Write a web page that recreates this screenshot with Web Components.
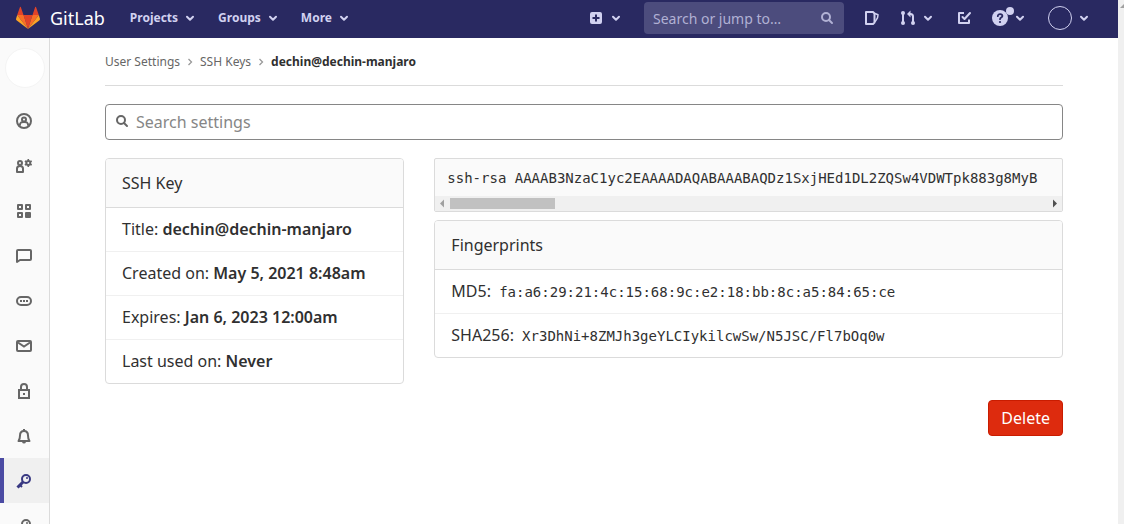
<!DOCTYPE html>
<html lang="en">
<head>
<meta charset="utf-8">
<title>dechin@dechin-manjaro · SSH Keys · User Settings · GitLab</title>
<style>
  body { margin: 0; background: #fff; color: #303030; font: 16px/24px "Noto Sans", sans-serif; }
</style>
</head>
<body>
<settings-app>
  <top-nav slot="header"></top-nav>
  <side-nav slot="sidebar"></side-nav>
  <bread-crumbs current="dechin@dechin-manjaro">
    <a href="#settings">User Settings</a>
    <a href="#keys">SSH Keys</a>
  </bread-crumbs>
  <settings-search></settings-search>
  <key-columns>
    <info-card slot="left" heading="SSH Key">
      <detail-row label="Title:"><strong>dechin@dechin-manjaro</strong></detail-row>
      <detail-row label="Created on:"><strong>May 5, 2021 8:48am</strong></detail-row>
      <detail-row label="Expires:"><strong>Jan 6, 2023 12:00am</strong></detail-row>
      <detail-row label="Last used on:"><strong>Never</strong></detail-row>
    </info-card>
    <key-text slot="right">ssh-rsa AAAAB3NzaC1yc2EAAAADAQABAAABAQDz1SxjHEd1DL2ZQSw4VDWTpk883g8MyB</key-text>
    <info-card slot="right" heading="Fingerprints">
      <detail-row label="MD5:"><code>fa:a6:29:21:4c:15:68:9c:e2:18:bb:8c:a5:84:65:ce</code></detail-row>
      <detail-row label="SHA256:"><code>Xr3DhNi+8ZMJh3geYLCIykilcwSw/N5JSC/Fl7bOq0w</code></detail-row>
    </info-card>
  </key-columns>
  <danger-button>Delete</danger-button>
</settings-app>

<script>
const define = (name, html, setup) => {
  const template = document.createElement('template');
  template.innerHTML = html;
  customElements.define(name, class extends HTMLElement {
    constructor() {
      super();
      this.attachShadow({ mode: 'open' }).append(template.content.cloneNode(true));
    }
    connectedCallback() { if (setup) setup(this, this.shadowRoot); }
  });
};

const line = 'fill="none" stroke="currentColor" stroke-width="2"';
const icons = {
  chevron: `<path ${line} stroke-linecap="round" stroke-linejoin="round" d="M5 6.8 8 9.8 11 6.8"/>`,
  plus: `<path fill="currentColor" fill-rule="evenodd" d="M4 2h8a2 2 0 0 1 2 2v8a2 2 0 0 1-2 2H4a2 2 0 0 1-2-2V4a2 2 0 0 1 2-2zm3 2.500v2.500H4.500v2H7v2.500h2V9h2.500V7H9V4.500z"/>`,
  search: `<circle cx="7" cy="7" r="4" ${line}/><path ${line} stroke-linecap="round" d="m10 10 3 3"/>`,
  issues: `<path ${line} stroke-linejoin="round" d="M2 2h7l1.500 1.500v9L9 14H2z"/><path fill="none" stroke="currentColor" stroke-width="1.500" stroke-linejoin="round" d="m11 3.500 3 1.300-.500 3-2.500 4"/>`,
  merge: `<path ${line} d="M3 3v10M13 13V6.500Q13 4 10.500 4H9"/><circle cx="3" cy="3" r="2" fill="currentColor"/><circle cx="3" cy="13" r="2" fill="currentColor"/><circle cx="13" cy="13" r="2" fill="currentColor"/><path fill="currentColor" d="m7 4 3.500-3.500v7z"/>`,
  todo: `<path ${line} stroke-linejoin="round" d="M8 3H3v10h10V9.500"/><path ${line} stroke-linecap="round" stroke-linejoin="round" d="m6.500 7 2 2L14 3"/>`,
  help: `<circle cx="8" cy="8" r="8" fill="currentColor"/><path fill="none" stroke="#292961" stroke-width="1.800" stroke-linecap="round" d="M5.800 6.200C5.800 3.300 10.400 3.600 10.400 6.100 10.400 7.700 8 7.500 8 9.200"/><circle cx="8" cy="12" r="1.100" fill="#292961"/>`,
  profile: `<circle cx="8" cy="8" r="7" ${line}/><circle cx="8" cy="6.500" r="2" ${line}/><path ${line} d="M3.800 12.800C4 9 5.500 9 8 9s4 0 4.200 3.800"/>`,
  account: `<circle cx="4" cy="5" r="2" ${line}/><path ${line} stroke-linejoin="round" d="M1 14V10.500Q1 8 4 8T7 10.500V14z"/><circle cx="12.300" cy="5" r="2" ${line}/><path fill="none" stroke="currentColor" stroke-width="1.600" d="M12.300 1v2m0 4v2M8.900 3l1.700 1m3.400 2 1.700 1m0-4-1.700 1m-3.400 2-1.700 1"/>`,
  apps: `<path ${line} stroke-linejoin="round" d="M2 2h4v4H2zm8 0h4v4h-4zM2 10h4v4H2z"/><rect x="9" y="9" width="6" height="6" rx="1" fill="currentColor"/>`,
  comment: `<path ${line} stroke-linejoin="round" d="M1 14V3Q1 2 2 2H14Q15 2 15 3V11Q15 12 14 12H4z"/>`,
  token: `<rect x="1" y="4" width="14" height="8" rx="4" ${line}/><path fill="currentColor" d="M4 7h2v2H4zm3 0h2v2H7zm3 0h2v2h-2z"/>`,
  mail: `<rect x="1" y="3" width="14" height="10" rx="1" ${line}/><path ${line} d="m2 4.500 6 4 6-4"/>`,
  lock: `<path ${line} d="M3 7h10v8H3zM5 7V4a3 3 0 0 1 6 0v3"/><path fill="currentColor" d="M7 10h2v2H7z"/>`,
  bell: `<path ${line} stroke-linejoin="round" d="M2.500 13h11Q12 11 12 7.500C12 4.500 10.500 3 8 3S4 4.500 4 7.500Q4 11 2.500 13z"/><path fill="currentColor" d="M7 1h2v2H7zM6 14h4q-.500 1.500-2 1.500T6 14z"/>`,
  key: `<circle cx="10" cy="6" r="4" ${line}/><circle cx="11" cy="5" r="1" fill="currentColor"/><path fill="none" stroke="currentColor" stroke-width="3" d="m7 9-5.500 5.500"/><path ${line} d="m3.500 11.500 2.500 2.500"/>`,
};

define('ui-icon', `
  <style>
    :host { display: block; flex: none; width: 16px; height: 16px; }
    svg { display: block; width: 100%; height: 100%; }
  </style>
  <svg viewBox="0 0 16 16" aria-hidden="true"></svg>`,
  (el, root) => { root.querySelector('svg').innerHTML = icons[el.getAttribute('name')]; });

define('nav-menu', `
  <style>
    :host { display: block; }
    button { display: flex; align-items: center; gap: 4px; height: 32px; margin: 0; padding: 0; border: 0; background: none; color: inherit; font: inherit; cursor: pointer; }
  </style>
  <button type="button"><slot></slot><ui-icon name="chevron"></ui-icon></button>`,
  (el, root) => root.querySelector('button').setAttribute('aria-label', el.getAttribute('label')));

define('top-nav', `
  <style>
    :host { display: block; background: #292961; color: #d1d1f0; }
    header { display: flex; align-items: center; justify-content: space-between; height: 38px; padding: 0 26px 2px 16px; box-sizing: border-box; }
    nav, .tools { display: flex; align-items: center; gap: 20px; }
    .menus { font-size: 12px; font-weight: 700; }
    a { color: inherit; text-decoration: none; }
    .brand { display: flex; align-items: center; gap: 10px; margin-right: 5px; color: #fff; font-size: 18px; font-weight: 400; }
    .brand svg { display: block; width: 24px; height: 24px; }
    form { position: relative; margin: 0; }
    input { display: block; width: 200px; height: 32px; box-sizing: border-box; margin: 0; padding: 0 32px 0 9px; border: 0; border-radius: 4px; background: #4c4c7d; color: #d1d1f0; font: 14px/20px "Noto Sans", sans-serif; }
    input::placeholder { color: #b1b1d4; opacity: 1; }
    form ui-icon { position: absolute; right: 9px; top: 8px; color: #b1b1d4; }
    .help { position: relative; }
    .dot { position: absolute; left: 14px; top: -3px; width: 8px; height: 8px; border-radius: 50%; background: #d1d1f0; }
    .avatar { width: 22px; height: 22px; border: 1px solid #d1d1f0; border-radius: 50%; }
  </style>
  <header>
    <nav class="menus" aria-label="Main">
      <a class="brand" href="#home">
        <svg viewBox="0 0 24 24" aria-hidden="true">
          <path fill="#e24329" d="m12 23 4.500-14h-9z"/>
          <path fill="#fc6d26" d="M12 23 7.500 9H1.200zM12 23l4.500-14h6.300z"/>
          <path fill="#fca326" d="M1.200 9 0 13q0 1 .500 1.300L12 23zM22.800 9 24 13q0 1-.500 1.300L12 23z"/>
          <path fill="#e24329" d="M1.200 9 4 1q.400-.700.800 0L7.500 9zM22.800 9 20 1q-.400-.700-.800 0L16.500 9z"/>
        </svg>
        <span>GitLab</span>
      </a>
      <nav-menu label="Projects">Projects</nav-menu>
      <nav-menu label="Groups">Groups</nav-menu>
      <nav-menu label="More">More</nav-menu>
    </nav>
    <div class="tools">
      <nav-menu label="New"><ui-icon name="plus"></ui-icon></nav-menu>
      <form role="search">
        <input type="text" aria-label="Search or jump to" placeholder="Search or jump to…">
        <ui-icon name="search"></ui-icon>
      </form>
      <a href="#issues" aria-label="Issues"><ui-icon name="issues"></ui-icon></a>
      <nav-menu label="Merge requests"><ui-icon name="merge"></ui-icon></nav-menu>
      <a href="#todos" aria-label="To-Do List"><ui-icon name="todo"></ui-icon></a>
      <nav-menu label="Help"><span class="help"><ui-icon name="help"></ui-icon><span class="dot"></span></span></nav-menu>
      <nav-menu label="User menu"><span class="avatar"></span></nav-menu>
    </div>
  </header>`);

define('side-link', `
  <style>
    :host { display: block; color: #666; }
    a { display: flex; align-items: center; height: 45px; padding-left: 16px; color: inherit; }
    :host([active]) { background: #f0f0f0; color: #393982; box-shadow: inset 4px 0 #4b4ba3; }
  </style>
  <a></a>`,
  (el, root) => {
    const link = root.querySelector('a');
    link.href = '#' + el.getAttribute('icon');
    link.setAttribute('aria-label', el.getAttribute('label'));
    const icon = document.createElement('ui-icon');
    icon.setAttribute('name', el.getAttribute('icon'));
    link.replaceChildren(icon);
  });

define('side-nav', `
  <style>
    :host { display: block; width: 49px; overflow: hidden; background: #fafafa; border-right: 1px solid #dbdbdb; }
    .avatar { display: block; width: 38px; height: 38px; margin: 10px 5px; border: 1px solid #f4f4f4; border-radius: 50%; background: #fff; }
  </style>
  <nav aria-label="User settings">
    <a class="avatar" href="#profile" aria-label="User Settings"></a>
    <side-link icon="profile" label="Profile"></side-link>
    <side-link icon="account" label="Account"></side-link>
    <side-link icon="apps" label="Applications"></side-link>
    <side-link icon="comment" label="Chat"></side-link>
    <side-link icon="token" label="Access Tokens"></side-link>
    <side-link icon="mail" label="Emails"></side-link>
    <side-link icon="lock" label="Password"></side-link>
    <side-link icon="bell" label="Notifications"></side-link>
    <side-link icon="key" label="SSH Keys" active></side-link>
    <side-link icon="key" label="GPG Keys"></side-link>
  </nav>`);

define('settings-app', `
  <style>
    :host { display: grid; grid-template: auto minmax(0, 1fr) / auto minmax(0, 1fr) 6px; height: 100vh; }
    slot[name=header] { display: block; grid-column: 1 / 3; }
    slot[name=sidebar] { display: grid; grid-row: 2; min-height: 0; }
    .gutter { grid-area: 1 / 3 / 3 / 4; overflow: hidden; background: #f0f0f0; }
    .gutter svg { display: block; width: 10px; height: 10px; margin-left: 2px; }
    main { grid-row: 2; grid-column: 2; overflow: hidden; }
    .content { max-width: 958px; margin: 0 auto; padding: 0 16px; }
  </style>
  <slot name="header"></slot>
  <slot name="sidebar"></slot>
  <main><div class="content"><slot></slot></div></main>
  <div class="gutter"><svg viewBox="0 0 10 10" aria-hidden="true"><path fill="#a0a0a0" d="m0 8 4-4 4 4z"/></svg></div>`);

define('bread-crumbs', `
  <style>
    :host { display: block; border-bottom: 1px solid #dbdbdb; font-size: 12px; line-height: 16px; color: #666; }
    nav { display: flex; align-items: center; height: 47px; }
    ::slotted(a) { color: #666; text-decoration: none; }
    a { color: #303030; font-weight: 700; text-decoration: none; }
    svg { width: 8px; height: 8px; margin: 0 6px; }
  </style>
  <nav aria-label="Breadcrumbs"></nav>`,
  (el, root) => {
    const nav = root.querySelector('nav');
    [...el.querySelectorAll('a')].forEach((a, i) => {
      a.slot = 'crumb' + i;
      nav.insertAdjacentHTML('beforeend', `<slot name="crumb${i}"></slot><svg viewBox="0 0 8 8" aria-hidden="true"><path fill="none" stroke="#999" stroke-width="1.300" d="m2.500 1 3 3-3 3"/></svg>`);
    });
    nav.insertAdjacentHTML('beforeend', '<a href="#key" aria-current="page"></a>');
    nav.lastElementChild.textContent = el.getAttribute('current');
  });

define('settings-search', `
  <style>
    :host { display: block; position: relative; margin: 18px 0; }
    input { display: block; width: 100%; height: 36px; box-sizing: border-box; margin: 0; padding: 0 12px 0 30px; border: 1px solid #868686; border-radius: 4px; background: #fff; color: #303030; font: 16px/24px "Noto Sans", sans-serif; }
    input::placeholder { color: #868686; opacity: 1; }
    ui-icon { position: absolute; left: 9px; top: 9px; color: #666; }
  </style>
  <input type="search" aria-label="Search settings" placeholder="Search settings">
  <ui-icon name="search"></ui-icon>`);

define('key-columns', `
  <style>
    :host { display: grid; grid-template-columns: minmax(0, 1fr) minmax(0, 2fr); margin: 0 -15px; }
    div { padding: 0 15px; }
    .right { display: grid; gap: 8px; align-content: start; grid-template-columns: minmax(0, 1fr); }
  </style>
  <div><slot name="left"></slot></div>
  <div class="right"><slot name="right"></slot></div>`);

define('info-card', `
  <style>
    :host { display: block; border: 1px solid #dbdbdb; border-radius: 4px; overflow: hidden; }
    h2 { margin: 0; padding: 12px 16px; background: #fafafa; border-bottom: 1px solid #dbdbdb; font: inherit; }
    ::slotted(:not(:last-child)) { border-bottom: 1px solid #f0f0f0; }
  </style>
  <h2></h2><slot></slot>`,
  (el, root) => { root.querySelector('h2').textContent = el.getAttribute('heading'); });

define('detail-row', `
  <style>
    :host { display: block; padding: 9px 16px 10px; }
    ::slotted(strong) { font-weight: 600; }
    ::slotted(code) { padding: 0 4px; font: 14px/20px "DejaVu Sans Mono", monospace; }
  </style>
  <span></span> <slot></slot>`,
  (el, root) => { root.querySelector('span').textContent = el.getAttribute('label'); });

define('key-text', `
  <style>
    :host { display: block; border: 1px solid #dbdbdb; border-radius: 2px; background: #fafafa; overflow: hidden; }
    pre { margin: 0; padding: 9px 12px 8px; overflow: hidden; font: 14px/20px "DejaVu Sans Mono", monospace; }
    .bar { display: flex; align-items: center; height: 15px; background: #f0f0f0; }
    svg { flex: none; width: 15px; height: 15px; }
    .track { flex: 1; }
    .thumb { width: 105px; height: 11px; background: #c1c1c1; }
  </style>
  <pre><slot></slot></pre>
  <div class="bar" aria-hidden="true">
    <svg viewBox="0 0 15 15"><path fill="#a0a0a0" d="m5 7.500 4-4v8z"/></svg>
    <div class="track"><div class="thumb"></div></div>
    <svg viewBox="0 0 15 15"><path fill="#505050" d="m10 7.500-4-4v8z"/></svg>
  </div>`);

define('danger-button', `
  <style>
    :host { display: flex; justify-content: flex-end; margin-top: 42px; }
    button { height: 36px; margin: 0; padding: 0 12px; border: 1px solid #c91c00; border-radius: 4px; background: #dd2b0e; color: #fff; font: 16px/24px "Noto Sans", sans-serif; cursor: pointer; }
    @media (min-width: 576px) { :host { margin-top: 16px; } }
  </style>
  <button type="button"><slot></slot></button>`);
</script>
</body>
</html>
